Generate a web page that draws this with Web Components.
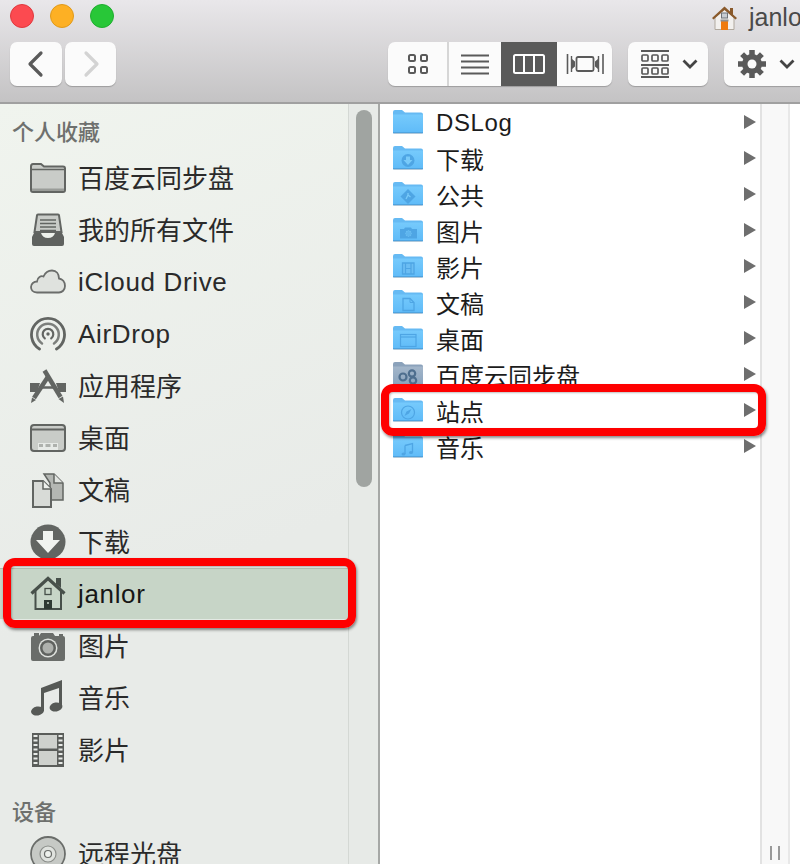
<!DOCTYPE html>
<html lang="zh-CN"><head><meta charset="utf-8"><title>Finder</title>
<style>
html,body{margin:0;padding:0;background:#fff}
body{width:800px;height:864px;overflow:hidden;font-family:"Liberation Sans","Noto Sans CJK SC",sans-serif}
</style></head><body>
<finder-window>
  <finder-toolbar slot="toolbar"></finder-toolbar>
  <finder-sidebar slot="sidebar">
    <side-head first>个人收藏</side-head>
    <side-item icon="folder">百度云同步盘</side-item>
    <side-item icon="tray">我的所有文件</side-item>
    <side-item icon="cloud">iCloud Drive</side-item>
    <side-item icon="airdrop">AirDrop</side-item>
    <side-item icon="apps">应用程序</side-item>
    <side-item icon="desktop">桌面</side-item>
    <side-item icon="docs">文稿</side-item>
    <side-item icon="download">下载</side-item>
    <side-item icon="home" selected>janlor</side-item>
    <side-item icon="camera">图片</side-item>
    <side-item icon="music">音乐</side-item>
    <side-item icon="film">影片</side-item>
    <side-head>设备</side-head>
    <side-item icon="disc">远程光盘</side-item>
  </finder-sidebar>
  <finder-column slot="column">
    <col-row glyph="none">DSLog</col-row>
    <col-row glyph="down">下载</col-row>
    <col-row glyph="public">公共</col-row>
    <col-row glyph="camera">图片</col-row>
    <col-row glyph="film">影片</col-row>
    <col-row glyph="doc">文稿</col-row>
    <col-row glyph="window">桌面</col-row>
    <col-row glyph="baidu">百度云同步盘</col-row>
    <col-row glyph="safari">站点</col-row>
    <col-row glyph="music">音乐</col-row>
  </finder-column>
  <red-mark slot="marks" style="left:3px;top:558px;width:353px;height:70px"></red-mark>
  <red-mark slot="marks" style="left:381px;top:384px;width:385px;height:52px"></red-mark>
</finder-window>
<script>
const S='#626562',F='#c9ccc8';
const SIDE={
folder:`<path d="M1 6.500Q1 4 3 4H11L14 6.500H33Q35 6.500 35 8.500V30Q35 32 33 32H3Q1 32 1 30Z" fill="${F}" stroke="${S}" stroke-width="2"/><path d="M2 9.500H34" stroke="${S}" stroke-width="1.500"/><path d="M2 28.500H34V31H2Z" fill="#999c98"/>`,
tray:`<path d="M7 3.500Q7 2.500 8 2.500H28Q29 2.500 29 3.500L31.500 20H4.500Z" fill="${F}" stroke="${S}" stroke-width="2"/><path d="M10 8H26M10 11.500H26M10 15H26M10 18.500H26" stroke="${S}" stroke-width="1.500"/><path d="M4 21H11Q12.500 26 18 26T25 21H32L34 25V32Q34 34 32 34H4Q2 34 2 32V25Z" fill="#5f625f"/>`,
cloud:`<path d="M7 28.500C2.500 28.500 1 25.500 1 23 1 19.500 4 17.500 7 17.500 7.500 13 11 11.500 13.500 12.500 15.500 8 19 6.500 22 6.500 26.500 6.500 29 10 29 14.500 32.500 15 35 18 35 22 35 26 32 28.500 29 28.500Z" fill="#dfe2de" stroke="#6b6d6b" stroke-width="1.800"/>`,
airdrop:`<g fill="none" stroke="${S}" stroke-linecap="round"><path d="M9.500 33A16.500 16.500 0 1 1 26.500 33" stroke-width="2.800"/><path d="M12 27.500A10.800 10.800 0 1 1 24 27.500" stroke-width="2.500" stroke="#7c7f7c"/><path d="M14.800 22.300A5.300 5.300 0 1 1 21.200 22.300" stroke-width="2.200"/></g><circle cx="18" cy="18" r="1.700" fill="${S}"/>`,
apps:`<path d="M0 15H10L7 24H0ZM26 15H36V24H29Z" fill="#626562"/><path d="M12 19.500H24" stroke="#626562" stroke-width="2.500"/><path d="M18.500 8L4 30" stroke="#626562" stroke-width="4.500"/><path d="M2 29.500L6 32 1 35Z" fill="#626562"/><path d="M14.500 2.500L30.500 29" stroke="#626562" stroke-width="4.500"/><path d="M28.500 31L33 28.500 34 35Z" fill="#626562"/>`,
desktop:`<rect x="1" y="5" width="34" height="26" rx="3" fill="${F}" stroke="${S}" stroke-width="2"/><path d="M2 9.500H34" stroke="${S}" stroke-width="2"/><rect x="8" y="23" width="20" height="7" fill="#e7eae7"/><path d="M9 25.500H13M15.500 25.500H20.500M23 25.500H27" stroke="#aeb1ad" stroke-width="3"/>`,
docs:`<path d="M14 2H24L33 11V28H20V11Z" fill="#b4b7b3" stroke="${S}" stroke-width="1.500"/><path d="M24 2V11H33" fill="#e1e4e0" stroke="${S}" stroke-width="1.500"/><path d="M3 9H13L21 17V35H3Z" fill="#d8dbd7" stroke="${S}" stroke-width="2"/><path d="M13 9V17H21" fill="#eef1ed" stroke="${S}" stroke-width="1.500"/>`,
download:`<circle cx="18" cy="18" r="17.500" fill="#626562"/><path d="M13 7H23V16H30L18 29 6 16H13Z" fill="#f1f3f0"/>`,
home:`<path d="M1.500 17.500L18 2.500 34.500 17.500" fill="none" stroke="#47504a" stroke-width="3.200"/><path d="M26 2H31V12L26 8Z" fill="#47504a"/><path d="M5.500 15V33H31V15" fill="none" stroke="#47504a" stroke-width="2"/><rect x="15" y="12.500" width="6" height="6" fill="none" stroke="#47504a" stroke-width="1.300"/><rect x="14" y="24" width="8" height="9" fill="#2f3a33"/><circle cx="18" cy="27" r="1" fill="#c7d5c7"/>`,
camera:`<path d="M1 10Q1 8 3 8H9L11 5H23L25 8H33Q35 8 35 10V31Q35 33 33 33H3Q1 33 1 31Z" fill="#6a6d6a"/><path d="M4 5H9V8H4ZM29 6H33V8H29Z" fill="#6a6d6a"/><circle cx="18" cy="20" r="9.500" fill="#dfe2de"/><circle cx="18" cy="20" r="8" fill="#5f625f"/><circle cx="18" cy="20" r="5.500" fill="#aeb1ad"/>`,
music:`<path d="M11 9L32 1V27H29V8L14 13V31H11Z" fill="#565956"/><ellipse cx="7.500" cy="31" rx="6.500" ry="4.500" fill="#565956" transform="rotate(-10 7.500 31)"/><ellipse cx="26" cy="27" rx="6.500" ry="4.500" fill="#565956" transform="rotate(-10 26 27)"/><path d="M11 8L32 0V5L11 13Z" fill="#565956"/>`,
film:`<rect x="2" y="1" width="32" height="34" fill="#5a5d5a"/><path d="M9 3H27V16.500H9ZM9 19H27V33H9Z" fill="#ced1cd"/><path d="M3.500 3H7.500M3.500 7.500H7.500M3.500 12H7.500M3.500 16.500H7.500M3.500 21H7.500M3.500 25.500H7.500M3.500 30H7.500M28.500 3H32.500M28.500 7.500H32.500M28.500 12H32.500M28.500 16.500H32.500M28.500 21H32.500M28.500 25.500H32.500M28.500 30H32.500" stroke="#e8ebe8" stroke-width="2" transform="translate(0 1)"/>`,
disc:`<circle cx="18" cy="18" r="17" fill="#c6c9c5" stroke="#6a6d6a" stroke-width="1.800"/><circle cx="18" cy="18" r="8" fill="#dfe2de" stroke="#8b8e8a" stroke-width="1.200"/><circle cx="18" cy="18" r="3.500" fill="#eef1ed" stroke="#6a6d6a" stroke-width="1.200"/>`
};
const G='#4ea5e4';
const GLYPH={
none:'',
down:`<circle cx="15" cy="14.500" r="6.500" fill="${G}"/><path d="M13 10.500H17V14H19.500L15 19 10.500 14H13Z" fill="#79caf9"/>`,
public:`<path d="M15 7L22.500 14.500 15 22 7.500 14.500Z" fill="${G}"/><path d="M13 17L15 13 17.500 15M15 13V11" stroke="#79caf9" stroke-width="1.300" fill="none"/>`,
camera:`<path d="M7 11H11L12 9.500H18L19 11H24V20.500H7Z" fill="${G}"/><circle cx="15.500" cy="15.500" r="3.500" fill="#79caf9" stroke="${G}"/><circle cx="15.500" cy="15.500" r="2.600" fill="#5fb5ee"/>`,
film:`<path d="M9.500 9H21V20H9.500Z" fill="#6bbdf3" stroke="${G}" stroke-width="1.300"/><path d="M12.500 9V20M18 9V20M12.500 14.500H18" stroke="${G}" stroke-width="1.200" fill="none"/>`,
doc:`<path d="M10 8.500H17L21 12.500V20.500H10Z" fill="none" stroke="${G}" stroke-width="1.300"/><path d="M17 8.500V12.500H21" fill="none" stroke="${G}" stroke-width="1"/>`,
window:`<rect x="7.500" y="8.500" width="15.500" height="12" fill="none" stroke="${G}" stroke-width="1.200"/><path d="M7.500 11H23" stroke="${G}" stroke-width="1.200"/>`,
baidu:`<circle cx="10" cy="15" r="3.500" fill="none" stroke="#4e6e8e" stroke-width="2.200"/><circle cx="19" cy="11.500" r="3.200" fill="none" stroke="#4e6e8e" stroke-width="2.200"/><circle cx="20" cy="18.500" r="3.200" fill="none" stroke="#4e6e8e" stroke-width="2.200"/>`,
safari:`<circle cx="15" cy="14.500" r="6.500" fill="none" stroke="${G}" stroke-width="1.200"/><path d="M18.500 11L16 15.500 13.500 13.500Z M11.500 18L16 15.500 13.500 13.500Z" fill="${G}"/>`,
music:`<path d="M12 11.500L19.500 9.500V18.500M12 11.500V20" fill="none" stroke="${G}" stroke-width="1.300"/><ellipse cx="10.500" cy="20" rx="2" ry="1.500" fill="${G}"/><ellipse cx="18" cy="18.500" rx="2" ry="1.500" fill="${G}"/>`
};
function shadow(el,html){el.attachShadow({mode:'open'}).innerHTML=html;}
let uid=0;
class FinderWindow extends HTMLElement{constructor(){super();shadow(this,`<style>
:host{display:flex;flex-direction:column;width:800px;height:864px;overflow:hidden;position:relative}
.main{display:flex;flex:1;min-height:0}
</style><slot name="toolbar"></slot><div class="main"><slot name="sidebar"></slot><slot name="column"></slot></div><slot name="marks"></slot>`);}}
class FinderToolbar extends HTMLElement{constructor(){super();shadow(this,`<style>
:host{display:block;height:102px;flex:none;background:linear-gradient(#e9e7ea,#c4c3c4);border-bottom:2px solid #a0a0a0;overflow:hidden}
.top{display:flex;align-items:center;height:32px;padding:0 0 0 10px;margin-bottom:10px}
.lights{display:flex;gap:16px}
.l{width:24px;height:24px;border-radius:50%;box-sizing:border-box}
.r{background:#fc4a50;border:1px solid #e0383d}.y{background:#fdb024;border:1px solid #e09a1a}.g{background:#28c738;border:1px solid #1fae2f}
.title{margin-left:auto;width:89px;flex:none;display:flex;align-items:center;gap:11px;white-space:nowrap;overflow:hidden;font-size:25px;color:#4a4a4a;height:32px;margin-top:2px}
.title svg{flex:none}
.bar{display:flex;height:44px;padding-left:10px}
.btn{background:#fbfbfb;border-radius:7px;box-shadow:0 1px 1px rgba(0,0,0,.22);height:44px;display:flex;align-items:center;justify-content:center;flex:none}
.nav{display:flex;gap:3px}
.seg{display:flex;margin-left:auto;background:#fbfbfb;border-radius:7px;box-shadow:0 1px 1px rgba(0,0,0,.22);overflow:hidden;height:44px;width:224px}
.seg div{display:flex;align-items:center;justify-content:center}
.divr{border-right:2px solid #d6d6d6}
.on{background:#5a5a5a}
svg{display:block}
</style>
<div class="top"><div class="lights"><div class="l r"></div><div class="l y"></div><div class="l g"></div></div>
<div class="title"><svg width="27" height="27" viewBox="0 0 27 27"><path d="M4 13V25.500H23V13L13.500 5Z" fill="#f2f0ee" stroke="#b0a89e" stroke-width="1"/><path d="M1 14L13.500 2.500 19 7.500V4H22V10.500L26 14 24.500 15.500 13.500 6 2.500 15.500Z" fill="#8a5a2c"/><rect x="10.500" y="9" width="6" height="5" fill="#c7ccd2" stroke="#6d7278" stroke-width="1"/><rect x="10" y="17" width="7" height="9" fill="#ef7a0d"/><rect x="9.500" y="15.500" width="8" height="2" fill="#8e8e8e"/></svg><span>janlor</span></div></div>
<div class="bar">
<div class="nav">
<div class="btn" style="width:52px"><svg width="20" height="28" viewBox="0 0 20 28"><path d="M15 3L4 14 15 25" fill="none" stroke="#5a5a5a" stroke-width="3.200" stroke-linecap="round" stroke-linejoin="round"/></svg></div>
<div class="btn" style="width:51px"><svg width="20" height="28" viewBox="0 0 20 28"><path d="M5 3L16 14 5 25" fill="none" stroke="#d3d3d3" stroke-width="3.200" stroke-linecap="round" stroke-linejoin="round"/></svg></div>
</div>
<div class="seg">
<div class="divr" style="width:59px"><svg width="22" height="22" viewBox="0 0 22 22"><g fill="none" stroke="#5a5a5a" stroke-width="2"><rect x="2" y="2" width="6" height="6" rx="1.500"/><rect x="14" y="2" width="6" height="6" rx="1.500"/><rect x="2" y="14" width="6" height="6" rx="1.500"/><rect x="14" y="14" width="6" height="6" rx="1.500"/></g></svg></div>
<div style="width:52px"><svg width="28" height="22" viewBox="0 0 28 22"><path d="M0 2.500H28M0 8.500H28M0 14.500H28M0 20.500H28" stroke="#5a5a5a" stroke-width="1.800"/></svg></div>
<div class="on" style="width:56px"><svg width="34" height="22" viewBox="0 0 34 22"><rect x="2" y="2" width="30" height="18" rx="1.500" fill="none" stroke="#fff" stroke-width="2"/><path d="M12 2V20M22 2V20" stroke="#fff" stroke-width="2"/></svg></div>
<div style="width:55px"><svg width="38" height="22" viewBox="0 0 38 22"><g fill="none" stroke="#5a5a5a"><rect x="10.500" y="4" width="17" height="14" rx="1.500" stroke-width="1.800"/><path d="M1.500 1V21M37 1V21" stroke-width="1.600"/><path d="M5.500 3V19M32.500 3V19" stroke-width="1.400"/></g><path d="M6 6L9 8.500V13.500L6 16ZM32 6L29 8.500V13.500L32 16Z" fill="#5a5a5a"/></svg></div>
</div>
<div class="btn" style="width:80px;margin-left:16px;gap:13px;padding-left:2px;box-sizing:border-box"><svg width="28" height="28" viewBox="0 0 28 28"><path d="M0 1H28M0 15H28M0 27H28" stroke="#5a5a5a" stroke-width="1.800"/><g fill="none" stroke="#5a5a5a" stroke-width="1.700"><rect x="1" y="5" width="6" height="6" rx="1"/><rect x="11" y="5" width="6" height="6" rx="1"/><rect x="21" y="5" width="6" height="6" rx="1"/><rect x="1" y="18" width="6" height="6" rx="1"/><rect x="11" y="18" width="6" height="6" rx="1"/><rect x="21" y="18" width="6" height="6" rx="1"/></g></svg><svg width="16" height="10" viewBox="0 0 16 10"><path d="M1.500 1.500L8 8 14.500 1.500" fill="none" stroke="#444" stroke-width="2.800"/></svg></div>
<div class="btn" style="width:86px;margin-left:16px;margin-right:-10px;gap:13px;justify-content:flex-start;padding-left:14px;box-sizing:border-box"><svg width="28" height="28" viewBox="0 0 28 28"><g stroke="#5a5a5a" stroke-width="5.500"><path d="M14 0V28M0 14H28M4.100 4.100L23.900 23.900M23.900 4.100L4.100 23.900"/></g><circle cx="14" cy="14" r="10" fill="#5a5a5a"/><circle cx="14" cy="14" r="4.500" fill="#fbfbfb"/></svg><svg width="16" height="10" viewBox="0 0 16 10"><path d="M1.500 1.500L8 8 14.500 1.500" fill="none" stroke="#444" stroke-width="2.800"/></svg></div>
</div>`);}}
class FinderSidebar extends HTMLElement{constructor(){super();shadow(this,`<style>
:host{display:flex;width:380px;flex:none;box-sizing:border-box;border-right:2px solid #a6a8a6;background:linear-gradient(160deg,#f0f4ee,#e8ebe8 60%);overflow:hidden}
.list{width:348px;flex:none}
.track{width:30px;box-sizing:border-box;flex:none;border-left:1px solid #d4d8d4;background:#e7eae7;padding:6px 0 0 7px}
.thumb{width:16px;height:377px;border-radius:8px;background:#a0a4a1}
</style><div class="list"><slot></slot></div><div class="track"><div class="thumb"></div></div>`);}}
class SideHead extends HTMLElement{constructor(){super();shadow(this,`<style>
:host{display:block;height:32px;line-height:34px;margin:20px 0 0;padding-left:12px;font-size:22px;font-weight:500;color:#6e706e;white-space:nowrap}
:host([first]){margin:12px 0 4px}
</style><slot></slot>`);}}
const txtClass=el=>/[^\x00-\x7f]/.test(el.textContent)?'cjk':'latin';
class SideItem extends HTMLElement{constructor(){super();shadow(this,`<style>
:host{display:flex;align-items:center;height:52px;box-sizing:border-box;padding-left:30px;gap:12px;font-size:26px;color:#2a2a2a;white-space:nowrap}
:host([selected]){background:#c7d5c7;box-shadow:inset 0 1px 0 #b2c0b2,inset 0 -1px 0 #e6ece6;color:#161616}
svg{flex:none;display:block;width:36px;height:36px}
.cjk{padding-bottom:3px}.latin{letter-spacing:.65px}
</style><svg viewBox="0 0 36 36">${SIDE[this.getAttribute('icon')]||''}</svg><span class="${txtClass(this)}"><slot></slot></span>`);}}
class FinderColumn extends HTMLElement{constructor(){super();shadow(this,`<style>
:host{display:flex;flex:1;min-width:0;background:#fff}
.list{width:380px;flex:none;padding-top:1px}
.bar{width:30px;box-sizing:border-box;flex:none;background:#f8f8f8;border-left:2px solid #e2e2e2;border-right:2px solid #e8e8e8;display:flex;align-items:flex-end;justify-content:center;gap:6px;padding-bottom:4px}
.bar i{display:block;width:2px;height:14px;background:#999}
</style><div class="list"><slot></slot></div><div class="bar"><i></i><i></i></div>`);}}
class ColRow extends HTMLElement{constructor(){super();
const g=this.getAttribute('glyph');const baidu=g==='baidu';const id='f'+(++uid);
const a=baidu?'#a3b6ca':'#76cafc',b=baidu?'#8aa3bd':'#5fbbf8',tab=baidu?'#8ba2bb':'#66baf3',edge=baidu?'#6f88a3':'#4fa3df';
shadow(this,`<style>
:host{display:flex;align-items:center;height:36px;padding:0 4px 0 13px;gap:13px;font-size:24px;color:#1c1c1c;white-space:nowrap}
svg.f{flex:none;display:block;width:30px;height:24px;margin-top:-2px}
.t{flex:1}
.cjk{padding-bottom:2px}.latin{letter-spacing:.6px}
.a{flex:none;width:0;height:0;border-left:12px solid #6e6e6e;border-top:7px solid transparent;border-bottom:7px solid transparent;margin-top:-2px}
</style><svg class="f" viewBox="0 0 30 24"><defs><linearGradient id="${id}" x1="0" y1="0" x2="0" y2="1"><stop offset="0" stop-color="${a}"/><stop offset="1" stop-color="${b}"/></linearGradient></defs><path d="M0 2Q0 0 2 0H9L12 2.500H28Q30 2.500 30 4.500V8H0Z" fill="${tab}"/><path d="M0 4.500H30V22Q30 23 29 23H1Q0 23 0 22Z" fill="url(#${id})"/><path d="M0 22H30V23Q30 23.500 29 23.500H1Q0 23.500 0 23Z" fill="${edge}"/><path d="M1 23.800H29" stroke="#bbb" stroke-width=".6"/>${GLYPH[g]||''}</svg><span class="t ${txtClass(this)}"><slot></slot></span><span class="a"></span>`);}}
class RedMark extends HTMLElement{constructor(){super();shadow(this,`<style>
:host{display:block;position:absolute;box-sizing:border-box;border:8px solid #fe0000;border-radius:12px;box-shadow:1px 2px 3px rgba(0,0,0,.45),inset 1px 1px 2px rgba(0,0,0,.25);pointer-events:none}
</style>`);}}
customElements.define('finder-window',FinderWindow);
customElements.define('finder-toolbar',FinderToolbar);
customElements.define('finder-sidebar',FinderSidebar);
customElements.define('side-head',SideHead);
customElements.define('side-item',SideItem);
customElements.define('finder-column',FinderColumn);
customElements.define('col-row',ColRow);
customElements.define('red-mark',RedMark);
</script>
</body></html>
